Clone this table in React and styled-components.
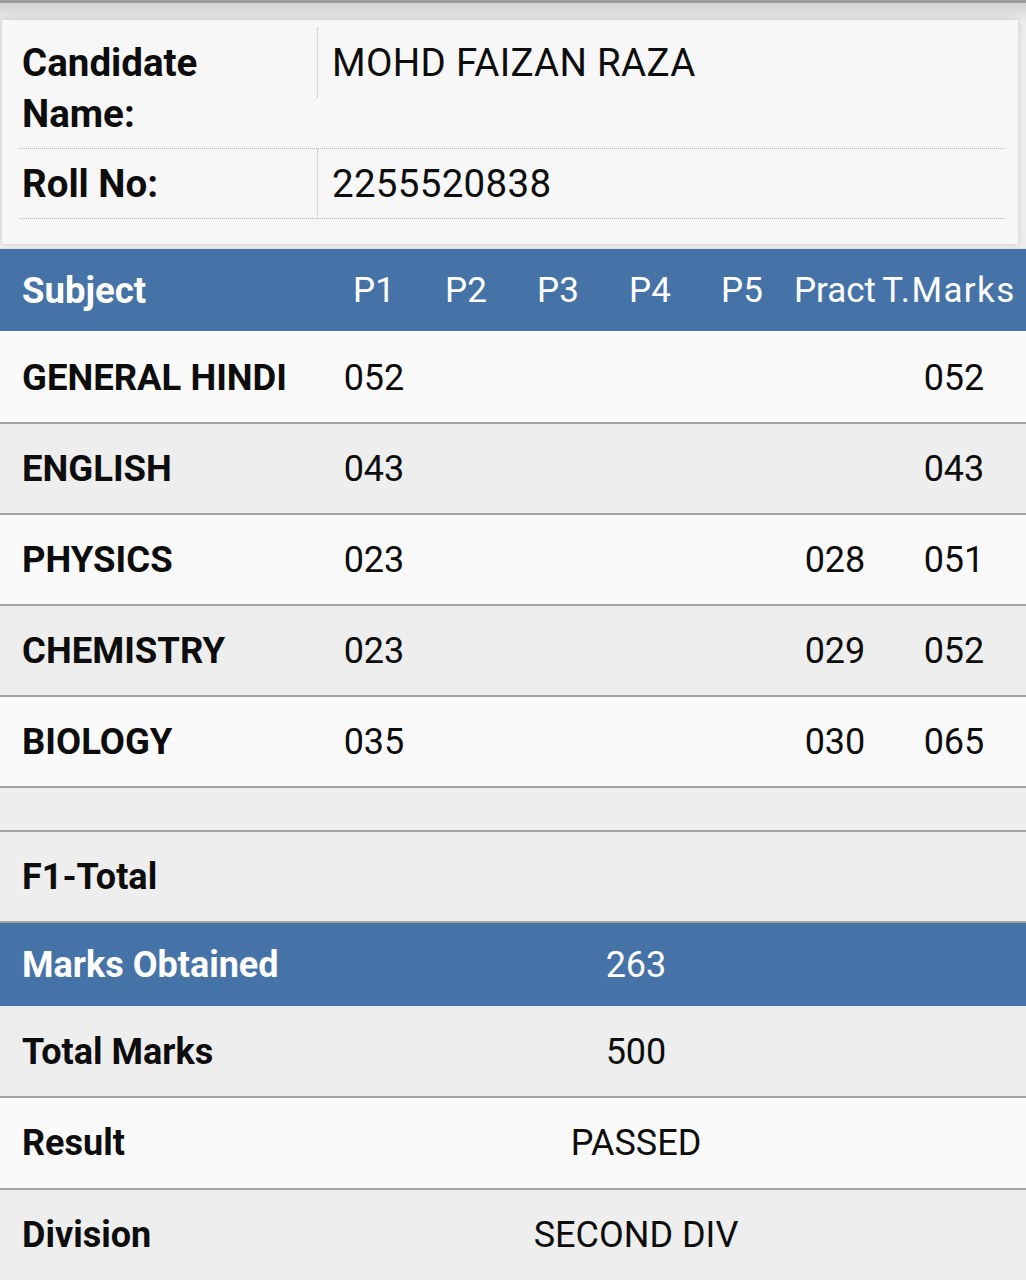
import React from "react";
import styled, { createGlobalStyle } from "styled-components";

const GlobalStyle = createGlobalStyle`
  html, body { margin: 0; padding: 0; }
  body {
    background: #eeeeee;
    font-family: Roboto, "Noto Sans", "Liberation Sans", sans-serif;
    color: #111;
    -webkit-font-smoothing: antialiased;
  }
`;

const Page = styled.div`
  width: 1026px;
  overflow: hidden;
`;

const TopSection = styled.section`
  border-top: 3px solid #9c9c9c;
  background: linear-gradient(#d2d2d2, #ebebeb 18px, #eeeeee 30px);
  padding: 17px 8px 4px 2px;
`;

const InfoCard = styled.div`
  background: #f7f7f7;
  box-shadow: 0 0 6px rgba(0, 0, 0, 0.16);
  padding: 8px 13px 25px 18px;
`;

const InfoRow = styled.div`
  display: flex;
  align-items: flex-start;
  border-bottom: 1px dotted #b9b9b9;
`;

const InfoLabel = styled.div`
  width: 295px;
  flex: none;
  padding: 9px 0 9px 2px;
  font-size: 38.5px;
  line-height: 51px;
  font-weight: 700;
  color: #0d0d0d;
`;

const InfoValue = styled.div`
  border-left: 1px dotted #b9b9b9;
  padding: 9px 14px;
  font-size: 38.5px;
  line-height: 51px;
  font-weight: 400;
  color: #0d0d0d;
  letter-spacing: 0.3px;
`;

const COLS = "328px repeat(5, 92px) 94px 1fr";

const HeaderRow = styled.div`
  display: grid;
  grid-template-columns: ${COLS};
  align-items: center;
  height: 83px;
  background: #4673a7;
  color: #ffffff;
  border-top: 1px solid #dfe6ee;
  box-sizing: border-box;
`;

const HeadCell = styled.div`
  font-size: ${(p) => (p.$bold ? "36.5px" : "35px")};
  font-weight: ${(p) => (p.$bold ? 700 : 400)};
  text-align: ${(p) => (p.$left ? "left" : "center")};
  padding-left: ${(p) => (p.$left ? "22px" : "0")};
  padding-right: ${(p) => (p.$wide ? "10px" : "0")};
  letter-spacing: ${(p) => (p.$wide ? "1.4px" : "0")};
  white-space: nowrap;
`;

const MarkRow = styled.div`
  display: grid;
  grid-template-columns: ${COLS};
  align-items: center;
  height: 91px;
  box-sizing: border-box;
  border-top: 2px solid ${(p) => (p.$first ? "transparent" : "#a4a4a4")};
  background: ${(p) => (p.$alt ? "#eeeeee" : "#fafafa")};
`;

const SubjectCell = styled.div`
  padding-left: 22px;
  font-size: 36.5px;
  font-weight: 700;
  color: #0d0d0d;
  white-space: nowrap;
`;

const MarkCell = styled.div`
  text-align: center;
  font-size: 36px;
  color: #0d0d0d;
`;

const Spacer = styled.div`
  height: 44px;
  box-sizing: border-box;
  border-top: 2px solid #a4a4a4;
  background: #eeeeee;
`;

const SummaryRow = styled.div`
  display: grid;
  grid-template-columns: 246px 1fr;
  align-items: center;
  height: ${(p) => p.$h}px;
  box-sizing: border-box;
  border-top: ${(p) => (p.$noTop ? "none" : "2px solid #a4a4a4")};
  border-bottom: ${(p) => (p.$highlight ? "2px solid #e4ecf5" : "none")};
  background: ${(p) =>
    p.$highlight ? "#4673a7" : p.$alt ? "#eeeeee" : "#fafafa"};
  color: ${(p) => (p.$highlight ? "#ffffff" : "#0d0d0d")};
`;

const SummaryLabel = styled.div`
  padding-left: 22px;
  font-size: 36px;
  font-weight: 700;
  white-space: nowrap;
`;

const SummaryValue = styled.div`
  text-align: center;
  font-size: 36px;
`;

const subjects = [
  { name: "GENERAL HINDI", p1: "052", pract: "", total: "052" },
  { name: "ENGLISH", p1: "043", pract: "", total: "043" },
  { name: "PHYSICS", p1: "023", pract: "028", total: "051" },
  { name: "CHEMISTRY", p1: "023", pract: "029", total: "052" },
  { name: "BIOLOGY", p1: "035", pract: "030", total: "065" },
];

export default function App() {
  return (
    <Page>
      <GlobalStyle />
      <TopSection>
        <InfoCard>
          <InfoRow>
            <InfoLabel>
              Candidate
              <br />
              Name:
            </InfoLabel>
            <InfoValue>MOHD FAIZAN RAZA</InfoValue>
          </InfoRow>
          <InfoRow>
            <InfoLabel>Roll No:</InfoLabel>
            <InfoValue>2255520838</InfoValue>
          </InfoRow>
        </InfoCard>
      </TopSection>

      <HeaderRow>
        <HeadCell $left $bold>Subject</HeadCell>
        <HeadCell>P1</HeadCell>
        <HeadCell>P2</HeadCell>
        <HeadCell>P3</HeadCell>
        <HeadCell>P4</HeadCell>
        <HeadCell>P5</HeadCell>
        <HeadCell>Pract</HeadCell>
        <HeadCell $wide>T.Marks</HeadCell>
      </HeaderRow>

      {subjects.map((s, i) => (
        <MarkRow key={s.name} $first={i === 0} $alt={i % 2 === 1}>
          <SubjectCell>{s.name}</SubjectCell>
          <MarkCell>{s.p1}</MarkCell>
          <MarkCell />
          <MarkCell />
          <MarkCell />
          <MarkCell />
          <MarkCell>{s.pract}</MarkCell>
          <MarkCell>{s.total}</MarkCell>
        </MarkRow>
      ))}

      <Spacer />
      <SummaryRow $h={91} $alt>
        <SummaryLabel>F1-Total</SummaryLabel>
        <SummaryValue />
      </SummaryRow>
      <SummaryRow $h={87} $highlight>
        <SummaryLabel>Marks Obtained</SummaryLabel>
        <SummaryValue>263</SummaryValue>
      </SummaryRow>
      <SummaryRow $h={88} $alt $noTop>
        <SummaryLabel>Total Marks</SummaryLabel>
        <SummaryValue>500</SummaryValue>
      </SummaryRow>
      <SummaryRow $h={92}>
        <SummaryLabel>Result</SummaryLabel>
        <SummaryValue>PASSED</SummaryValue>
      </SummaryRow>
      <SummaryRow $h={92} $alt>
        <SummaryLabel>Division</SummaryLabel>
        <SummaryValue>SECOND DIV</SummaryValue>
      </SummaryRow>
    </Page>
  );
}
